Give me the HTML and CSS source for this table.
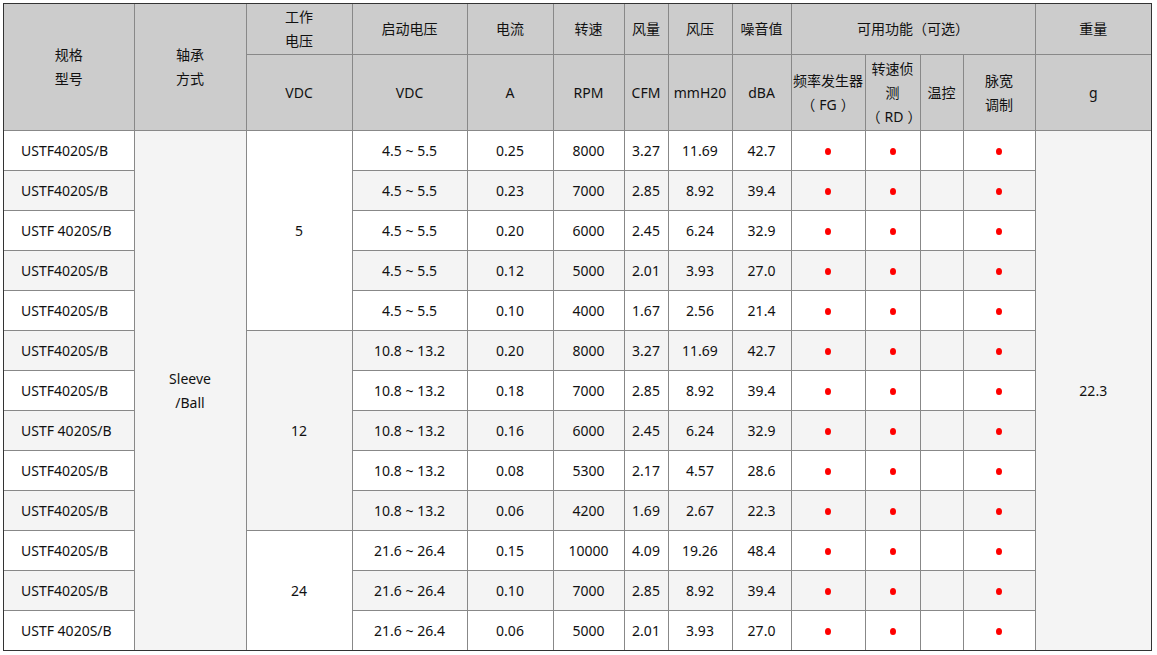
FILE: index.html
```html
<!DOCTYPE html>
<html lang="zh">
<head>
<meta charset="utf-8">
<title>USTF4020S/B</title>
<link rel="stylesheet" href="styles.css">
</head>
<body>
<div class="wrap">
<table class="spec">
<colgroup>
<col class="c1"><col class="c2"><col class="c3"><col class="c4"><col class="c5"><col class="c6"><col class="c7"><col class="c8"><col class="c9"><col class="c10"><col class="c11"><col class="c12"><col class="c13"><col class="c14">
</colgroup>
<thead>
<tr class="h1">
<th rowspan="2">规格<br>型号</th>
<th rowspan="2">轴承<br>方式</th>
<th>工作<br>电压</th>
<th>启动电压</th>
<th>电流</th>
<th>转速</th>
<th>风量</th>
<th>风压</th>
<th>噪音值</th>
<th colspan="4">可用功能（可选）</th>
<th>重量</th>
</tr>
<tr class="h2">
<th>VDC</th>
<th>VDC</th>
<th>A</th>
<th>RPM</th>
<th>CFM</th>
<th>mmH20</th>
<th>dBA</th>
<th>频率发生器<br>（<span class="pin">FG</span>）</th>
<th>转速侦<br>测<br>（<span class="pin">RD</span>）</th>
<th>温控</th>
<th>脉宽<br>调制</th>
<th>g</th>
</tr>
</thead>
<tbody>
<tr>
<td class="model">USTF4020S/B</td>
<td rowspan="13" class="merge">Sleeve<br>/Ball</td>
<td rowspan="5" class="volt">5</td>
<td>4.5 ~ 5.5</td><td>0.25</td><td>8000</td><td>3.27</td><td>11.69</td><td>42.7</td>
<td><span class="dot"></span></td><td><span class="dot"></span></td><td></td><td><span class="dot"></span></td>
<td rowspan="13" class="merge">22.3</td>
</tr>
<tr class="alt">
<td class="model">USTF4020S/B</td>
<td>4.5 ~ 5.5</td><td>0.23</td><td>7000</td><td>2.85</td><td>8.92</td><td>39.4</td>
<td><span class="dot"></span></td><td><span class="dot"></span></td><td></td><td><span class="dot"></span></td>
</tr>
<tr>
<td class="model">USTF 4020S/B</td>
<td>4.5 ~ 5.5</td><td>0.20</td><td>6000</td><td>2.45</td><td>6.24</td><td>32.9</td>
<td><span class="dot"></span></td><td><span class="dot"></span></td><td></td><td><span class="dot"></span></td>
</tr>
<tr class="alt">
<td class="model">USTF4020S/B</td>
<td>4.5 ~ 5.5</td><td>0.12</td><td>5000</td><td>2.01</td><td>3.93</td><td>27.0</td>
<td><span class="dot"></span></td><td><span class="dot"></span></td><td></td><td><span class="dot"></span></td>
</tr>
<tr>
<td class="model">USTF4020S/B</td>
<td>4.5 ~ 5.5</td><td>0.10</td><td>4000</td><td>1.67</td><td>2.56</td><td>21.4</td>
<td><span class="dot"></span></td><td><span class="dot"></span></td><td></td><td><span class="dot"></span></td>
</tr>
<tr class="alt">
<td class="model">USTF4020S/B</td>
<td rowspan="5" class="volt">12</td>
<td>10.8 ~ 13.2</td><td>0.20</td><td>8000</td><td>3.27</td><td>11.69</td><td>42.7</td>
<td><span class="dot"></span></td><td><span class="dot"></span></td><td></td><td><span class="dot"></span></td>
</tr>
<tr>
<td class="model">USTF4020S/B</td>
<td>10.8 ~ 13.2</td><td>0.18</td><td>7000</td><td>2.85</td><td>8.92</td><td>39.4</td>
<td><span class="dot"></span></td><td><span class="dot"></span></td><td></td><td><span class="dot"></span></td>
</tr>
<tr class="alt">
<td class="model">USTF 4020S/B</td>
<td>10.8 ~ 13.2</td><td>0.16</td><td>6000</td><td>2.45</td><td>6.24</td><td>32.9</td>
<td><span class="dot"></span></td><td><span class="dot"></span></td><td></td><td><span class="dot"></span></td>
</tr>
<tr>
<td class="model">USTF4020S/B</td>
<td>10.8 ~ 13.2</td><td>0.08</td><td>5300</td><td>2.17</td><td>4.57</td><td>28.6</td>
<td><span class="dot"></span></td><td><span class="dot"></span></td><td></td><td><span class="dot"></span></td>
</tr>
<tr class="alt">
<td class="model">USTF4020S/B</td>
<td>10.8 ~ 13.2</td><td>0.06</td><td>4200</td><td>1.69</td><td>2.67</td><td>22.3</td>
<td><span class="dot"></span></td><td><span class="dot"></span></td><td></td><td><span class="dot"></span></td>
</tr>
<tr>
<td class="model">USTF4020S/B</td>
<td rowspan="3" class="volt">24</td>
<td>21.6 ~ 26.4</td><td>0.15</td><td>10000</td><td>4.09</td><td>19.26</td><td>48.4</td>
<td><span class="dot"></span></td><td><span class="dot"></span></td><td></td><td><span class="dot"></span></td>
</tr>
<tr class="alt">
<td class="model">USTF4020S/B</td>
<td>21.6 ~ 26.4</td><td>0.10</td><td>7000</td><td>2.85</td><td>8.92</td><td>39.4</td>
<td><span class="dot"></span></td><td><span class="dot"></span></td><td></td><td><span class="dot"></span></td>
</tr>
<tr>
<td class="model">USTF 4020S/B</td>
<td>21.6 ~ 26.4</td><td>0.06</td><td>5000</td><td>2.01</td><td>3.93</td><td>27.0</td>
<td><span class="dot"></span></td><td><span class="dot"></span></td><td></td><td><span class="dot"></span></td>
</tr>
</tbody>
</table>
</div>
</body>
</html>
```

FILE: styles.css
```css
html, body {
  margin: 0;
  padding: 0;
  background: #fff;
}
body {
  padding: 3px 0 0 3px;
  font-family: "Noto Sans", "Noto Sans CJK SC", sans-serif;
  font-size: 14px;
  color: #111;
}
.wrap {
  width: 1147px;
  border: 1px solid #333;
}
.spec {
  width: 1147px;
  table-layout: fixed;
  border-collapse: collapse;
  border-style: hidden;
  text-spacing-trim: space-all;
}
.c1 { width: 130px; }
.c2 { width: 112px; }
.c3 { width: 106px; }
.c4 { width: 115px; }
.c5 { width: 86px; }
.c6 { width: 71px; }
.c7 { width: 44px; }
.c8 { width: 64px; }
.c9 { width: 59px; }
.c10 { width: 74px; }
.c11 { width: 55px; }
.c12 { width: 43px; }
.c13 { width: 72px; }
.c14 { width: 116px; }
.spec th, .spec td {
  border: 1px solid #888;
  padding: 0 1px;
  text-align: center;
  vertical-align: middle;
  line-height: 24px;
  font-weight: normal;
  white-space: nowrap;
}
.spec th {
  background: #ccc;
  color: #111;
}
.spec .h1 th { height: 50px; }
.spec .h2 th { height: 75px; }
.pin { padding: 0 4px; }
.spec td {
  height: 39px;
  background: #fff;
}
.spec tr.alt td { background: #f4f4f4; }
.spec td.model {
  text-align: left;
  padding-left: 17px;
}
.spec td.merge { background: #f4f4f4; }
.spec td.volt { background: #fff; }
.dot {
  display: inline-block;
  width: 6px;
  height: 7px;
  border-radius: 50%;
  background: #f00;
  vertical-align: middle;
}
```
